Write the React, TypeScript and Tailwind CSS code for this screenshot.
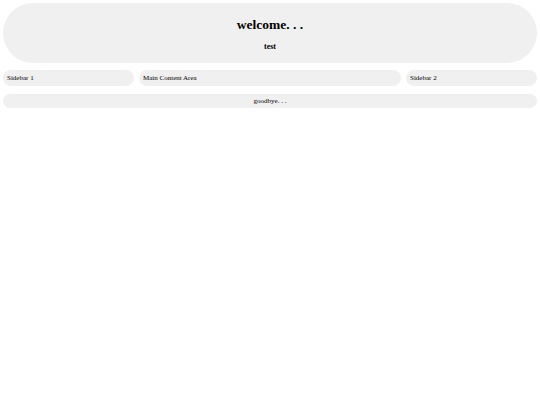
export default function App() {
    return (
        <div className="min-h-[405px] bg-white p-[3px] font-['Liberation_Serif',serif] text-black">
            {/* Başlıq */}
            <header className="flex h-[60px] flex-col items-center justify-center rounded-[30px] bg-[#f0f0f0] pt-[3px]">
                <h1 className="text-[13.5px] font-bold leading-none">welcome. . .</h1>
                <p className="mt-[11px] text-[8px] font-bold leading-none">test</p>
            </header>

            {/* Sütunlar */}
            <div className="mt-[7px] grid grid-cols-[1fr_2fr_1fr] gap-[5px]">
                <div className="flex h-[16px] items-center rounded-[8px] bg-[#f0f0f0] px-[4px] text-[7px]">Sidebar 1</div>
                <div className="flex h-[16px] items-center rounded-[8px] bg-[#f0f0f0] px-[4px] text-[7px]">Main Content Area</div>
                <div className="flex h-[16px] items-center rounded-[8px] bg-[#f0f0f0] px-[4px] text-[7px]">Sidebar 2</div>
            </div>

            <footer className="mt-[8px] flex h-[14px] items-center justify-center rounded-[7px] bg-[#f0f0f0] text-[7px]">
                goodbye. . .
            </footer>
        </div>
    );
}
